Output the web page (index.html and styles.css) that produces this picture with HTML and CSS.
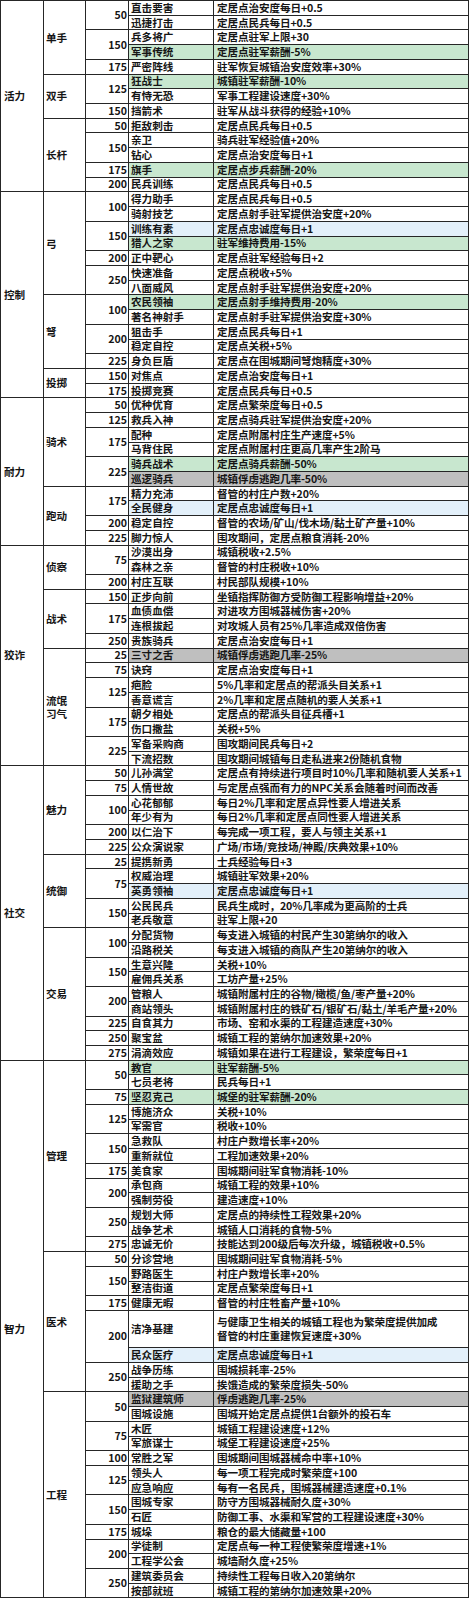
FILE: index.html
```html
<!DOCTYPE html>
<html lang="zh">
<head>
<meta charset="utf-8">
<title>定居点技能表</title>
<link rel="stylesheet" href="styles.css">
</head>
<body>
<table class="perks">
<colgroup><col class="c1"><col class="c2"><col class="c3"><col class="c4"><col class="c5"></colgroup>
<tbody>
<tr><td class="attr" rowspan="13">活力</td><td class="skill" rowspan="5">单手</td><td class="lvl" rowspan="2">50</td><td class="n">直击要害</td><td class="e">定居点治安度每日+0.5</td></tr>
<tr><td class="n">迅捷打击</td><td class="e">定居点民兵每日+0.5</td></tr>
<tr><td class="lvl" rowspan="2">150</td><td class="n">兵多将广</td><td class="e">定居点驻军上限+30</td></tr>
<tr class="g"><td class="n">军事传统</td><td class="e">定居点驻军薪酬-5%</td></tr>
<tr><td class="lvl">175</td><td class="n">严密阵线</td><td class="e">驻军恢复城镇治安度效率+30%</td></tr>
<tr class="g"><td class="skill" rowspan="3">双手</td><td class="lvl" rowspan="2">125</td><td class="n">狂战士</td><td class="e">城镇驻军薪酬-10%</td></tr>
<tr><td class="n">有恃无恐</td><td class="e">军事工程建设速度+30%</td></tr>
<tr><td class="lvl">150</td><td class="n">挡箭术</td><td class="e">驻军从战斗获得的经验+10%</td></tr>
<tr><td class="skill" rowspan="5">长杆</td><td class="lvl">50</td><td class="n">拒敌刺击</td><td class="e">定居点民兵每日+0.5</td></tr>
<tr><td class="lvl" rowspan="2">150</td><td class="n">亲卫</td><td class="e">骑兵驻军经验值+20%</td></tr>
<tr><td class="n">钻心</td><td class="e">定居点治安度每日+1</td></tr>
<tr class="g"><td class="lvl">175</td><td class="n">旗手</td><td class="e">定居点步兵薪酬-20%</td></tr>
<tr><td class="lvl">200</td><td class="n">民兵训练</td><td class="e">定居点民兵每日+0.5</td></tr>

<tr><td class="attr" rowspan="14">控制</td><td class="skill" rowspan="7">弓</td><td class="lvl" rowspan="2">100</td><td class="n">得力助手</td><td class="e">定居点民兵每日+0.5</td></tr>
<tr><td class="n">骑射技艺</td><td class="e">定居点射手驻军提供治安度+20%</td></tr>
<tr class="b"><td class="lvl" rowspan="2">150</td><td class="n">训练有素</td><td class="e">定居点忠诚度每日+1</td></tr>
<tr class="g"><td class="n">猎人之家</td><td class="e">驻军维持费用-15%</td></tr>
<tr><td class="lvl">200</td><td class="n">正中靶心</td><td class="e">定居点驻军经验每日+2</td></tr>
<tr><td class="lvl" rowspan="2">250</td><td class="n">快速准备</td><td class="e">定居点税收+5%</td></tr>
<tr><td class="n">八面威风</td><td class="e">定居点射手驻军提供治安度+20%</td></tr>
<tr class="g"><td class="skill" rowspan="5">弩</td><td class="lvl" rowspan="2">100</td><td class="n">农民领袖</td><td class="e">定居点射手维持费用-20%</td></tr>
<tr><td class="n">著名神射手</td><td class="e">定居点射手驻军提供治安度+30%</td></tr>
<tr><td class="lvl" rowspan="2">200</td><td class="n">狙击手</td><td class="e">定居点民兵每日+1</td></tr>
<tr><td class="n">稳定自控</td><td class="e">定居点关税+5%</td></tr>
<tr><td class="lvl">225</td><td class="n">身负巨盾</td><td class="e">定居点在围城期间弩炮精度+30%</td></tr>
<tr><td class="skill" rowspan="2">投掷</td><td class="lvl">150</td><td class="n">对焦点</td><td class="e">定居点治安度每日+1</td></tr>
<tr><td class="lvl">175</td><td class="n">投掷竞赛</td><td class="e">定居点民兵每日+0.5</td></tr>

<tr><td class="attr" rowspan="10">耐力</td><td class="skill" rowspan="6">骑术</td><td class="lvl">50</td><td class="n">优种优育</td><td class="e">定居点繁荣度每日+0.5</td></tr>
<tr><td class="lvl">125</td><td class="n">救兵入神</td><td class="e">定居点骑兵驻军提供治安度+20%</td></tr>
<tr><td class="lvl" rowspan="2">175</td><td class="n">配种</td><td class="e">定居点附属村庄生产速度+5%</td></tr>
<tr><td class="n">马背住民</td><td class="e">定居点附属村庄更高几率产生2阶马</td></tr>
<tr class="g"><td class="lvl" rowspan="2">225</td><td class="n">骑兵战术</td><td class="e">定居点骑兵薪酬-50%</td></tr>
<tr class="s"><td class="n">巡逻骑兵</td><td class="e">城镇俘虏逃跑几率-50%</td></tr>
<tr><td class="skill" rowspan="4">跑动</td><td class="lvl" rowspan="2">175</td><td class="n">精力充沛</td><td class="e">督管的村庄户数+20%</td></tr>
<tr class="b"><td class="n">全民健身</td><td class="e">定居点忠诚度每日+1</td></tr>
<tr><td class="lvl">200</td><td class="n">稳定自控</td><td class="e">督管的农场/矿山/伐木场/黏土矿产量+10%</td></tr>
<tr><td class="lvl">225</td><td class="n">脚力惊人</td><td class="e">围攻期间，定居点粮食消耗-20%</td></tr>

<tr><td class="attr" rowspan="15">狡诈</td><td class="skill" rowspan="3">侦察</td><td class="lvl" rowspan="2">75</td><td class="n">沙漠出身</td><td class="e">城镇税收+2.5%</td></tr>
<tr><td class="n">森林之亲</td><td class="e">督管的村庄税收+10%</td></tr>
<tr><td class="lvl">200</td><td class="n">村庄互联</td><td class="e">村民部队规模+10%</td></tr>
<tr><td class="skill" rowspan="4">战术</td><td class="lvl">150</td><td class="n">正步向前</td><td class="e">坐镇指挥防御方受防御工程影响增益+20%</td></tr>
<tr><td class="lvl" rowspan="2">175</td><td class="n">血债血偿</td><td class="e">对进攻方围城器械伤害+20%</td></tr>
<tr><td class="n">连根拔起</td><td class="e">对攻城人员有25%几率造成双倍伤害</td></tr>
<tr><td class="lvl">250</td><td class="n">贵族骑兵</td><td class="e">定居点治安度每日+1</td></tr>
<tr class="s"><td class="skill" rowspan="8">流氓<br>习气</td><td class="lvl">25</td><td class="n">三寸之舌</td><td class="e">城镇俘虏逃跑几率-25%</td></tr>
<tr><td class="lvl">75</td><td class="n">诀窍</td><td class="e">定居点治安度每日+1</td></tr>
<tr><td class="lvl" rowspan="2">125</td><td class="n">疤脸</td><td class="e">5%几率和定居点的帮派头目关系+1</td></tr>
<tr><td class="n">善意谎言</td><td class="e">2%几率和定居点随机的要人关系+1</td></tr>
<tr><td class="lvl" rowspan="2">175</td><td class="n">朝夕相处</td><td class="e">定居点的帮派头目征兵槽+1</td></tr>
<tr><td class="n">伤口撒盐</td><td class="e">关税+5%</td></tr>
<tr><td class="lvl" rowspan="2">225</td><td class="n">军备采购商</td><td class="e">围攻期间民兵每日+2</td></tr>
<tr><td class="n">下流招数</td><td class="e">围攻期间城镇每日走私进来2份随机食物</td></tr>

<tr><td class="attr" rowspan="20">社交</td><td class="skill" rowspan="6">魅力</td><td class="lvl">50</td><td class="n">儿孙满堂</td><td class="e">定居点有持续进行项目时10%几率和随机要人关系+1</td></tr>
<tr><td class="lvl">75</td><td class="n">人情世故</td><td class="e">与定居点强而有力的NPC关系会随着时间而改善</td></tr>
<tr><td class="lvl" rowspan="2">100</td><td class="n">心花郁郁</td><td class="e">每日2%几率和定居点异性要人增进关系</td></tr>
<tr><td class="n">年少有为</td><td class="e">每日2%几率和定居点同性要人增进关系</td></tr>
<tr><td class="lvl">200</td><td class="n">以仁治下</td><td class="e">每完成一项工程，要人与领主关系+1</td></tr>
<tr><td class="lvl">225</td><td class="n">公众演说家</td><td class="e">广场/市场/竞技场/神殿/庆典效果+10%</td></tr>
<tr><td class="skill" rowspan="5">统御</td><td class="lvl">25</td><td class="n">提携新勇</td><td class="e">士兵经验每日+3</td></tr>
<tr><td class="lvl" rowspan="2">75</td><td class="n">权威治理</td><td class="e">城镇驻军效果+20%</td></tr>
<tr class="b"><td class="n">英勇领袖</td><td class="e">定居点忠诚度每日+1</td></tr>
<tr><td class="lvl" rowspan="2">150</td><td class="n">公民民兵</td><td class="e">民兵生成时，20%几率成为更高阶的士兵</td></tr>
<tr><td class="n">老兵敬意</td><td class="e">驻军上限+20</td></tr>
<tr><td class="skill" rowspan="9">交易</td><td class="lvl" rowspan="2">100</td><td class="n">分配货物</td><td class="e">每支进入城镇的村民产生30第纳尔的收入</td></tr>
<tr><td class="n">沿路税关</td><td class="e">每支进入城镇的商队产生20第纳尔的收入</td></tr>
<tr><td class="lvl" rowspan="2">150</td><td class="n">生意兴隆</td><td class="e">关税+10%</td></tr>
<tr><td class="n">雇佣兵关系</td><td class="e">工坊产量+25%</td></tr>
<tr><td class="lvl" rowspan="2">200</td><td class="n">管粮人</td><td class="e">城镇附属村庄的谷物/橄榄/鱼/枣产量+20%</td></tr>
<tr><td class="n">商站领头</td><td class="e">城镇附属村庄的铁矿石/银矿石/黏土/羊毛产量+20%</td></tr>
<tr><td class="lvl">225</td><td class="n">自食其力</td><td class="e">市场、窑和水渠的工程建造速度+30%</td></tr>
<tr><td class="lvl">250</td><td class="n">聚宝盆</td><td class="e">城镇工程的第纳尔加速效果+20%</td></tr>
<tr><td class="lvl">275</td><td class="n">涓滴效应</td><td class="e">城镇如果在进行工程建设，繁荣度每日+1</td></tr>

<tr class="g"><td class="attr" rowspan="35">智力</td><td class="skill" rowspan="13">管理</td><td class="lvl" rowspan="2">50</td><td class="n">教官</td><td class="e">驻军薪酬-5%</td></tr>
<tr><td class="n">七员老将</td><td class="e">民兵每日+1</td></tr>
<tr class="g"><td class="lvl">75</td><td class="n">坚忍克己</td><td class="e">城堡的驻军薪酬-20%</td></tr>
<tr><td class="lvl" rowspan="2">125</td><td class="n">博施济众</td><td class="e">关税+10%</td></tr>
<tr><td class="n">军需官</td><td class="e">税收+10%</td></tr>
<tr><td class="lvl" rowspan="2">150</td><td class="n">急救队</td><td class="e">村庄户数增长率+20%</td></tr>
<tr><td class="n">重新就位</td><td class="e">工程加速效果+20%</td></tr>
<tr><td class="lvl">175</td><td class="n">美食家</td><td class="e">围城期间驻军食物消耗-10%</td></tr>
<tr><td class="lvl" rowspan="2">200</td><td class="n">承包商</td><td class="e">城镇工程的效果+10%</td></tr>
<tr><td class="n">强制劳役</td><td class="e">建造速度+10%</td></tr>
<tr><td class="lvl" rowspan="2">250</td><td class="n">规划大师</td><td class="e">定居点的持续性工程效果+20%</td></tr>
<tr><td class="n">战争艺术</td><td class="e">城镇人口消耗的食物-5%</td></tr>
<tr><td class="lvl">275</td><td class="n">忠诚无价</td><td class="e">技能达到200级后每次升级，城镇税收+0.5%</td></tr>
<tr><td class="skill" rowspan="8">医术</td><td class="lvl">50</td><td class="n">分诊营地</td><td class="e">围城期间驻军食物消耗-5%</td></tr>
<tr><td class="lvl" rowspan="2">150</td><td class="n">野路医生</td><td class="e">村庄户数增长率+20%</td></tr>
<tr><td class="n">整洁街道</td><td class="e">定居点繁荣度每日+1</td></tr>
<tr><td class="lvl">175</td><td class="n">健康无暇</td><td class="e">督管的村庄牲畜产量+10%</td></tr>
<tr class="tall"><td class="lvl" rowspan="2">200</td><td class="n">洁净基建</td><td class="e two">与健康卫生相关的城镇工程也为繁荣度提供加成<br>督管的村庄重建恢复速度+30%</td></tr>
<tr class="b"><td class="n">民众医疗</td><td class="e">定居点忠诚度每日+1</td></tr>
<tr><td class="lvl" rowspan="2">250</td><td class="n">战争历练</td><td class="e">围城损耗率-25%</td></tr>
<tr><td class="n">援助之手</td><td class="e">挨饿造成的繁荣度损失-50%</td></tr>
<tr class="s"><td class="skill" rowspan="14">工程</td><td class="lvl" rowspan="2">50</td><td class="n">监狱建筑师</td><td class="e">俘虏逃跑几率-25%</td></tr>
<tr><td class="n">围城设施</td><td class="e">围城开始定居点提供1台额外的投石车</td></tr>
<tr><td class="lvl" rowspan="2">75</td><td class="n">木匠</td><td class="e">城镇工程建设速度+12%</td></tr>
<tr><td class="n">军旅谋士</td><td class="e">城堡工程建设速度+25%</td></tr>
<tr><td class="lvl">100</td><td class="n">常胜之军</td><td class="e">围城期间围城器械命中率+10%</td></tr>
<tr><td class="lvl" rowspan="2">125</td><td class="n">领头人</td><td class="e">每一项工程完成时繁荣度+100</td></tr>
<tr><td class="n">应急响应</td><td class="e">每有一名民兵，围城器械建造速度+0.1%</td></tr>
<tr><td class="lvl" rowspan="2">150</td><td class="n">围城专家</td><td class="e">防守方围城器械耐久度+30%</td></tr>
<tr><td class="n">石匠</td><td class="e">防御工事、水渠和军营的工程建设速度+30%</td></tr>
<tr><td class="lvl">175</td><td class="n">城垛</td><td class="e">粮仓的最大储藏量+100</td></tr>
<tr><td class="lvl" rowspan="2">200</td><td class="n">学徒制</td><td class="e">定居点每一种工程使繁荣度增速+1%</td></tr>
<tr><td class="n">工程学公会</td><td class="e">城墙耐久度+25%</td></tr>
<tr><td class="lvl" rowspan="2">250</td><td class="n">建筑委员会</td><td class="e">持续性工程每日收入20第纳尔</td></tr>
<tr><td class="n">按部就班</td><td class="e">城镇工程的第纳尔加速效果+20%</td></tr>
</tbody>
</table>
</body>
</html>
```

FILE: styles.css
```css
html, body {
  margin: 0;
  padding: 0;
  background: #ffffff;
}

.perks {
  width: 468px;
  table-layout: fixed;
  border-collapse: collapse;
  font-family: "Noto Sans CJK SC", "Noto Sans", sans-serif;
  font-size: 10.6px;
  font-weight: 700;
  color: #151515;
}

.c1 { width: 43px; }
.c2 { width: 42px; }
.c3 { width: 43px; }
.c4 { width: 85px; }
.c5 { width: 255px; }

.perks tr {
  height: 14.72px;
}

.perks tr.tall {
  height: 37.3px;
}

.perks td {
  border: 1px solid #262626;
  padding: 0 2px;
  line-height: 12px;
  vertical-align: middle;
  white-space: nowrap;
  overflow: hidden;
}

.perks td.attr {
  padding-left: 3px;
}

.perks td.skill {
  padding-left: 2px;
  line-height: 13.5px;
}

.perks td.lvl {
  text-align: right;
  padding-right: 1px;
}

.perks td.e {
  padding-left: 3px;
  letter-spacing: -0.1px;
}

.perks td.e.two {
  line-height: 14.4px;
}

.perks tr.g td.n,
.perks tr.g td.e {
  background: #c8e7cf;
}

.perks tr.b td.n,
.perks tr.b td.e {
  background: #e3f0fa;
}

.perks tr.s td.n,
.perks tr.s td.e {
  background: #bfbfbf;
}
```
